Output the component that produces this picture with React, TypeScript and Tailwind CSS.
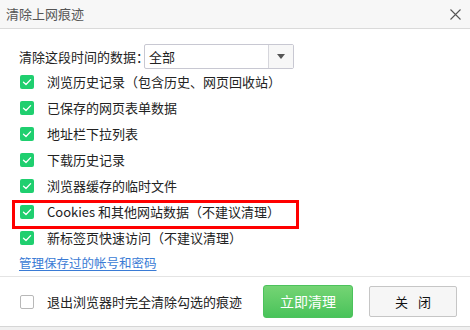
const items = [
  '浏览历史记录（包含历史、网页回收站）',
  '已保存的网页表单数据',
  '地址栏下拉列表',
  '下载历史记录',
  '浏览器缓存的临时文件',
  'Cookies 和其他网站数据（不建议清理）',
  '新标签页快速访问（不建议清理）',
]

function CheckBox({ checked }: { checked: boolean }) {
  if (!checked) {
    return <div className="w-[14px] h-[14px] rounded-[2px] border border-[#b8b8b8] bg-white shrink-0" />
  }
  return (
    <div className="w-[14px] h-[14px] rounded-[2px] bg-[#1fcf6f] flex items-center justify-center shrink-0">
      <svg width="10" height="10" viewBox="0 0 10 10" fill="none">
        <path d="M1.5 5.2 L4 7.5 L8.6 2.6" stroke="white" strokeWidth="1.3" strokeLinecap="round" strokeLinejoin="round" />
      </svg>
    </div>
  )
}

export default function App() {
  return (
    <div
      className="relative w-[470px] h-[330px] bg-white overflow-hidden text-[13px] text-[#222] whitespace-nowrap"
      style={{ fontFamily: '"Noto Sans CJK SC", "Noto Sans", sans-serif' }}
    >
      {/* TITLE */}
      <div className="h-[29px] bg-[#f7f7f7] border-b border-[#dadada] flex items-center justify-between pl-[6px] pr-[9px]">
        <span className="text-[#555]">清除上网痕迹</span>
        <svg width="11" height="11" viewBox="0 0 11 11">
          <path d="M0.5 0.5 L10.5 10.5 M10.5 0.5 L0.5 10.5" stroke="#555" strokeWidth="1.1" />
        </svg>
      </div>

      {/* BODY */}
      <div className="pl-[19px] pt-[15px]">
        <div className="flex items-center h-[25px]">
          <span className="w-[125px] shrink-0">清除这段时间的数据：</span>
          <div className="w-[150px] h-[25px] border border-[#c8c8d2] rounded-[2px] flex">
            <div className="flex-1 flex items-center pl-[4px]">全部</div>
            <div className="w-[25px] border-l border-[#d6d6dc] bg-[#f7f7f7] flex items-center justify-center">
              <svg width="8" height="5" viewBox="0 0 8 5">
                <path d="M0 0 H8 L4 5 Z" fill="#555" />
              </svg>
            </div>
          </div>
        </div>

        <div className="flex flex-col">
          {items.map((label) => (
            <div key={label} className="h-[26px] flex items-center">
              <div className="w-[28px] pl-[1px]">
                <CheckBox checked />
              </div>
              <span>{label}</span>
            </div>
          ))}
        </div>

        <div className="h-[25px] flex items-center">
          <span className="text-[#3a7bd5] underline underline-offset-2 text-[12.5px]">管理保存过的帐号和密码</span>
        </div>
      </div>

      {/* FOOTER */}
      <div className="border-t border-[#e4e4e4] h-[50px] flex items-center pl-[20px] pr-[13px]">
        <CheckBox checked={false} />
        <span className="ml-[13px]">退出浏览器时完全清除勾选的痕迹</span>
        <div className="ml-auto flex items-center gap-[16px]">
          <button className="w-[90px] h-[33px] rounded-[3px] bg-gradient-to-b from-[#74d474] to-[#48c35a] border border-[#4cc25c] text-white text-[14px]">
            立即清理
          </button>
          <button className="w-[88px] h-[31px] rounded-[2px] bg-[#f6f6f6] border border-[#c6c6c6] text-[#111] flex items-center justify-center gap-[10px]">
            <span>关</span>
            <span>闭</span>
          </button>
        </div>
      </div>
      <div className="border-t border-[#d6d6d6] bg-[#f0f0f0] h-[4px]" />

      {/* HIGHLIGHT */}
      <div className="absolute left-[12px] top-[200px] w-[287px] h-[29px] border-[3px] border-[#ff0000]" />
    </div>
  )
}
